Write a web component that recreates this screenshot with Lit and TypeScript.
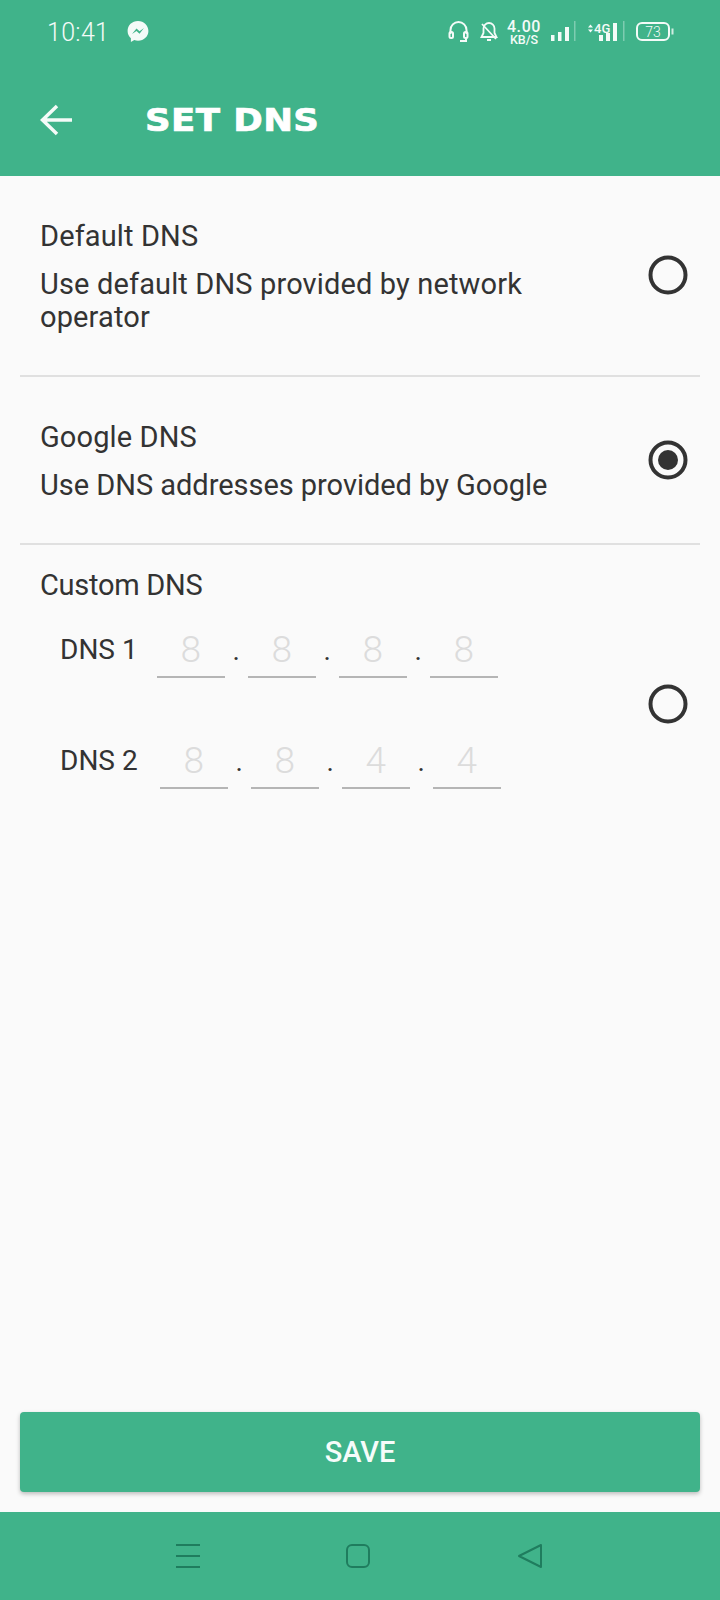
import { LitElement, html, css, svg } from "lit";
import { customElement } from "lit/decorators.js";

const radio = (on: boolean) => html`<svg class="radio" viewBox="0 0 40 40" aria-hidden="true">
  <circle cx="20" cy="20" r="17.5" fill="none" stroke="#333" stroke-width="4"></circle>
  ${on ? svg`<circle cx="20" cy="20" r="10" fill="#333"></circle>` : ""}
</svg>`;

@customElement("app-root")
export class AppRoot extends LitElement {
  static styles = css`
    :host { display: flex; flex-direction: column; width: 720px; height: 1600px; background: #fafafa; color: #333; font-family: Roboto, "Noto Sans", sans-serif; }
    .top { background: #40b38a; color: #f4fbf8; height: 176px; flex: none; }
    .status { height: 64px; display: flex; align-items: center; padding-left: 47px; }
    .time { font-size: 25px; font-weight: 300; letter-spacing: 0.3px; width: 80px; }
    .status-right { margin-left: auto; display: flex; align-items: center; height: 64px; width: 274px; }
    .status-right svg { display: block; flex: none; }
    .headset { margin-left: 2px; }
    .bell { margin-left: 11px; }
    .speed { display: flex; flex-direction: column; align-items: center; width: 36px; line-height: 1; margin-left: 8px; margin-right: 9px; }
    .speed b { font-size: 16px; font-weight: 500; line-height: 14px; letter-spacing: 0.6px; }
    .speed i { font-style: normal; font-size: 12.5px; font-weight: 500; line-height: 11px; }
    .net { margin-left: 9px; }
    .bar { display: flex; align-items: center; height: 112px; }
    .back { margin-left: 40px; width: 105px; flex: none; }
    .back svg { display: block; }
    .title { font-family: "DejaVu Sans", sans-serif; font-weight: 700; font-size: 32px; letter-spacing: 0.4px; transform: scaleX(1.11); transform-origin: left center; color: #fff; -webkit-text-stroke: 0.7px #fff; }
    main { flex: 1; display: flex; flex-direction: column; }
    .row { display: flex; align-items: center; justify-content: space-between; padding: 44px 32px 41px 40px; }
    .row .radio { margin-bottom: 3px; }
    .row.first .radio { margin-bottom: 5px; }
    .line { height: 2px; background: #e0e0e0; margin: 0 20px; flex: none; }
    .t { font-size: 29px; line-height: 33px; letter-spacing: 0.12px; }
    .t.custom-t { letter-spacing: -0.28px; }
    .d { font-size: 29px; line-height: 33px; letter-spacing: 0.14px; margin-top: 15px; width: 530px; }
    .d.google { letter-spacing: -0.03px; }
    .radio { width: 40px; height: 40px; flex: none; display: block; }
    .custom { padding: 24px 32px 0 40px; }
    .dns-wrap { display: flex; align-items: center; justify-content: space-between; margin-top: 16px; }
    .dns-rows { display: flex; flex-direction: column; gap: 51px; padding-left: 20px; }
    .dns-row { display: flex; align-items: center; }
    .lbl { font-size: 28px; margin-right: 22px; margin-top: 2px; }
    .lbl.first { margin-right: 19px; }
    .f { width: 68px; height: 53px; padding-top: 5px; border-bottom: 2px solid #b5b5b5; text-align: center; font-size: 37px; font-weight: 300; line-height: 54px; color: #dcdcdc; }
    .dot { width: 23px; text-align: center; font-size: 28px; line-height: 28px; margin-top: 6px; color: #333; }
    .spacer { flex: 1; }
    .save { margin: 0 20px 20px; height: 80px; background: #40b38a; border-radius: 4px; box-shadow: 0 2px 4px rgba(0,0,0,0.25); display: flex; align-items: center; justify-content: center; color: #f6fcfa; font-size: 29px; font-weight: 500; }
    .nav { height: 88px; flex: none; background: #40b38a; display: flex; align-items: center; padding-left: 175px; }
    .nav svg { display: block; flex: none; }
    .nav .m2 { margin-left: 144px; }
    .nav .m3 { margin-left: 146px; }
  `;

  private field(vals: string[]) {
    return vals.map((v, i) => html`${i ? html`<span class="dot">.</span>` : ""}<span class="f">${v}</span>`);
  }

  render() {
    return html`
      <header class="top">
        <div class="status">
          <span class="time">10:41</span>
          <svg width="22" height="24" viewBox="0 0 22 24" aria-hidden="true">
            <path d="M11 1C5 1 .6 5.3.6 11c0 3 1.200 5.500 3.300 7.300V22l3.400-1.900c1.100.4 2.400.6 3.700.6 6 0 10.400-4.300 10.400-9.700S17 1 11 1z" fill="#f4fbf8"></path>
            <path d="M5 14l4.500-5.500 3 2.700L17 8l-4.500 5.700-3-2.700z" fill="#40b38a"></path>
          </svg>
          <div class="status-right">
            <svg class="headset" width="21" height="24" viewBox="0 0 21 24" fill="none" stroke="#f4fbf8" stroke-width="2" aria-hidden="true">
              <path d="M2.500 14V10a8 8 0 0 1 16 0v4"></path>
              <rect x="1.500" y="12" width="3.500" height="6" rx="1.500"></rect>
              <rect x="16" y="12" width="3.500" height="6" rx="1.500"></rect>
              <path d="M18 18v3h-6" stroke-width="2"></path>
            </svg>
            <svg class="bell" width="18" height="22" viewBox="0 0 18 22" fill="none" stroke="#f4fbf8" stroke-width="1.800" aria-hidden="true">
              <path d="M9 2a5.500 5.500 0 0 0-5.500 5.500V12L1.500 16h15l-2-4V7.500A5.500 5.500 0 0 0 9 2z"></path>
              <path d="M7 19h4M2 3l14 15"></path>
            </svg>
            <div class="speed"><b>4.00</b><i>KB/S</i></div>
            <svg width="26" height="24" viewBox="0 0 26 24" aria-hidden="true" fill="#f4fbf8">
              <rect x="0" y="15" width="3.500" height="6"></rect>
              <rect x="7" y="12" width="3.500" height="9"></rect>
              <rect x="14" y="7" width="4" height="14"></rect>
              <rect x="23" y="1" width="1.500" height="20" opacity=".35"></rect>
            </svg>
            <svg class="net" width="50" height="24" viewBox="0 0 50 24" aria-hidden="true" fill="#f4fbf8">
              <path d="M2 7.500l2.500-3 2.500 3zM2 9.500l2.500 3 2.500-3z"></path>
              <text x="8" y="13" font-size="13" font-weight="500" font-family="Roboto, sans-serif">4G</text>
              <rect x="13" y="15" width="4" height="6"></rect>
              <rect x="20" y="13" width="4" height="8"></rect>
              <rect x="27" y="3" width="4" height="18"></rect>
              <rect x="37" y="1" width="1.500" height="20" opacity=".35"></rect>
            </svg>
            <svg width="40" height="24" viewBox="0 0 40 24" aria-hidden="true">
              <rect x="1" y="3" width="32" height="17" rx="5" fill="none" stroke="#f4fbf8" stroke-width="2"></rect>
              <text x="17" y="16.500" font-size="14" font-weight="300" text-anchor="middle" fill="#f4fbf8" font-family="Roboto, sans-serif">73</text>
              <rect x="35.500" y="8.500" width="2" height="6" fill="#f4fbf8" opacity=".8"></rect>
            </svg>
          </div>
        </div>
        <div class="bar">
          <span class="back">
            <svg width="32" height="32" viewBox="0 0 32 32" fill="none" stroke="#f4fbf8" stroke-width="3.500" aria-hidden="true">
              <path d="M32 16H3M17 2 2.500 16 17 30"></path>
            </svg>
          </span>
          <span class="title">SET DNS</span>
        </div>
      </header>
      <main>
        <section class="row first">
          <div><div class="t">Default DNS</div><div class="d">Use default DNS provided by network operator</div></div>
          ${radio(false)}
        </section>
        <div class="line"></div>
        <section class="row">
          <div><div class="t">Google DNS</div><div class="d google">Use DNS addresses provided by Google</div></div>
          ${radio(true)}
        </section>
        <div class="line"></div>
        <section class="custom">
          <div class="t custom-t">Custom DNS</div>
          <div class="dns-wrap">
            <div class="dns-rows">
              <div class="dns-row"><span class="lbl first">DNS 1</span>${this.field(["8", "8", "8", "8"])}</div>
              <div class="dns-row"><span class="lbl">DNS 2</span>${this.field(["8", "8", "4", "4"])}</div>
            </div>
            ${radio(false)}
          </div>
        </section>
        <div class="spacer"></div>
        <div class="save">SAVE</div>
      </main>
      <nav class="nav">
        <svg width="26" height="26" viewBox="0 0 26 26" fill="none" stroke="#1f7d5e" stroke-width="2" aria-hidden="true"><path d="M1 2h24M1 13h24M1 24h24"></path></svg>
        <svg class="m2" width="26" height="26" viewBox="0 0 26 26" fill="none" stroke="#1f7d5e" stroke-width="2" aria-hidden="true"><rect x="2" y="2" width="22" height="22" rx="5"></rect></svg>
        <svg class="m3" width="26" height="26" viewBox="0 0 26 26" fill="none" stroke="#1f7d5e" stroke-width="2" stroke-linejoin="round" aria-hidden="true"><path d="M24 2v22L2 13z"></path></svg>
      </nav>
    `;
  }
}
